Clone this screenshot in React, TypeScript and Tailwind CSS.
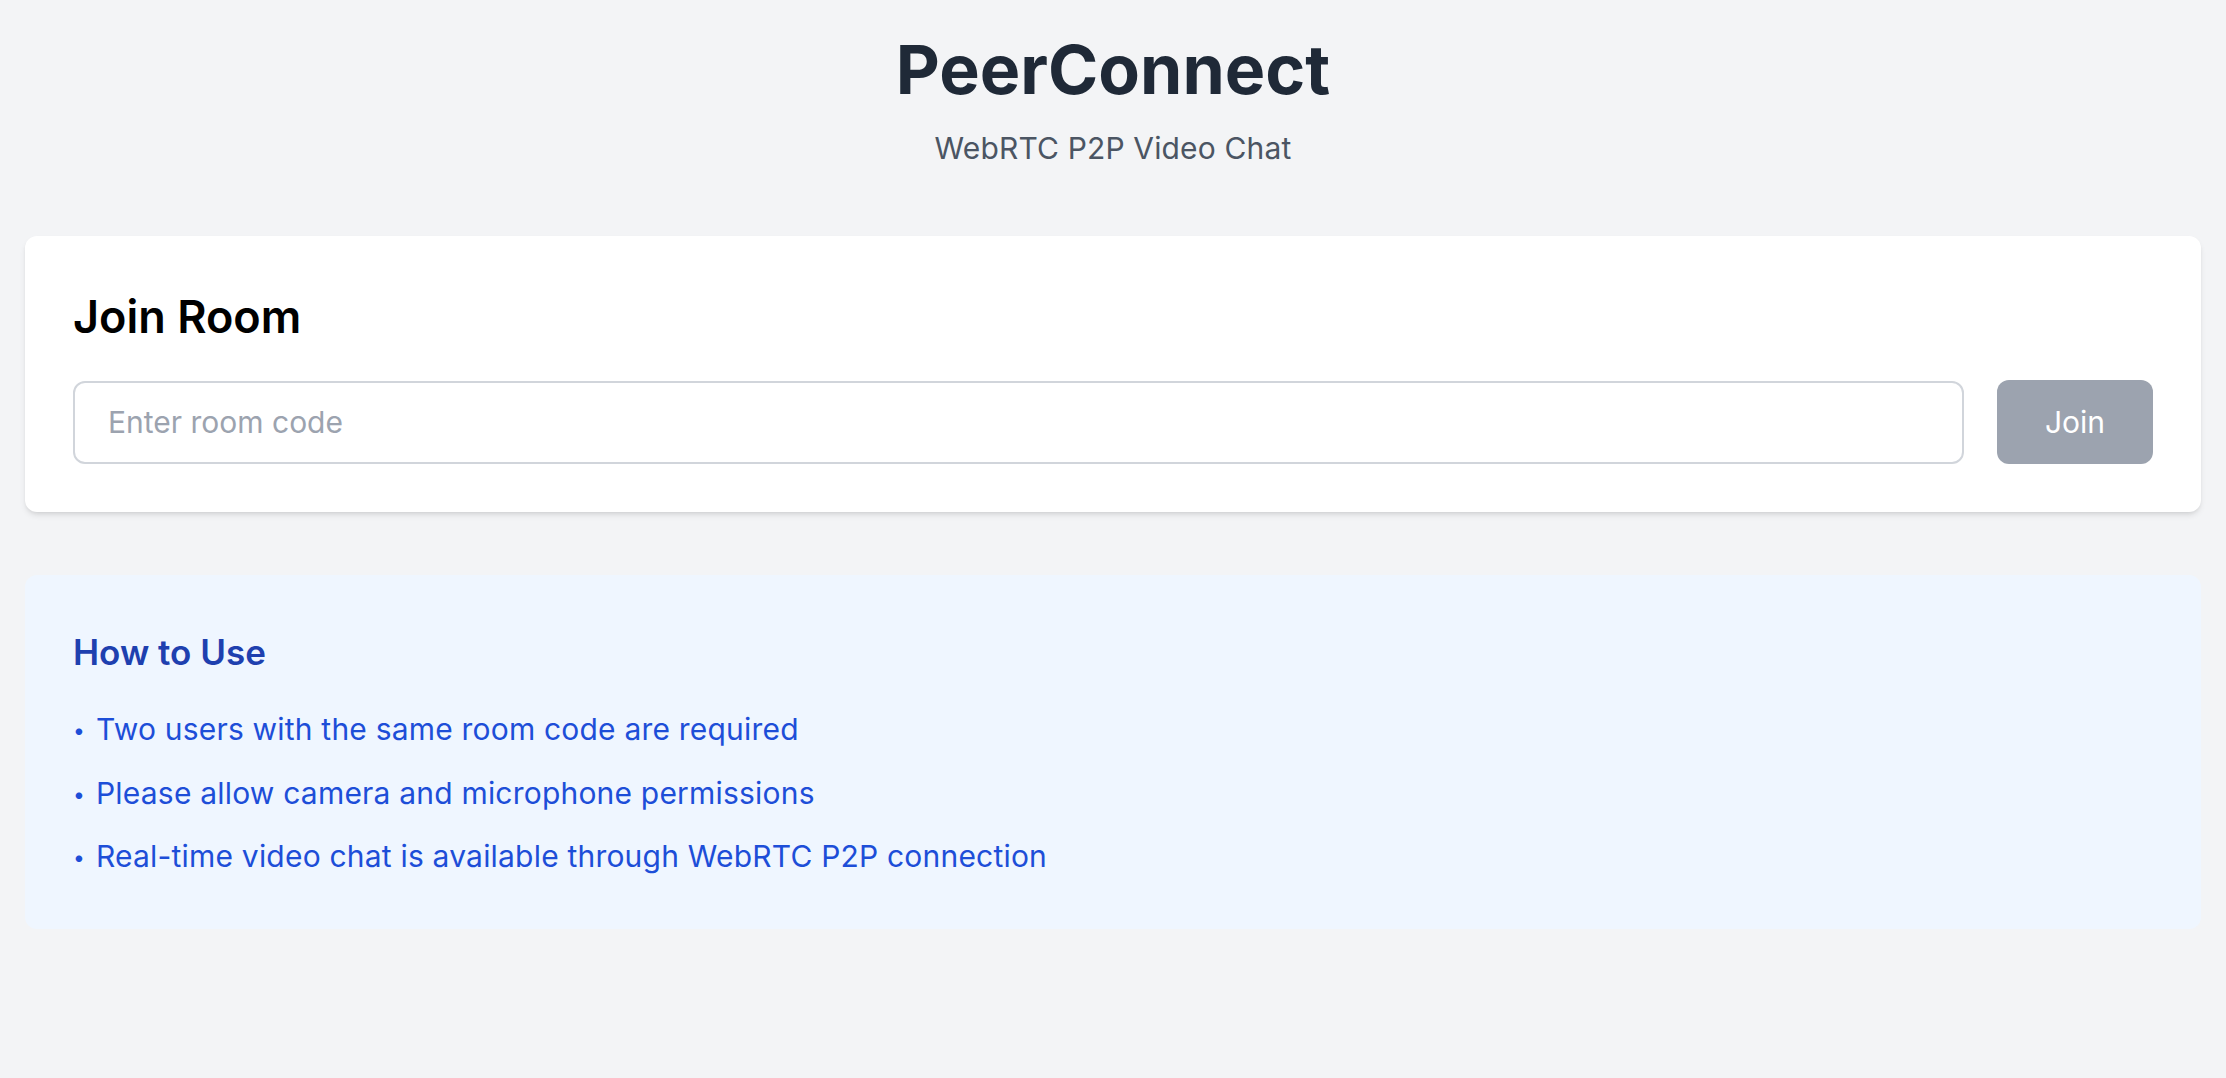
import { useState } from 'react'

const tips = [
  'Two users with the same room code are required',
  'Please allow camera and microphone permissions',
  'Real-time video chat is available through WebRTC P2P connection',
]

export default function App() {
  const [code, setCode] = useState('')

  return (
    <div className="min-h-screen bg-[#f3f4f6] font-['Inter',sans-serif]">
      <div className="mx-auto max-w-[2176px] pt-[35px] pb-12">
        <header className="text-center mb-[67px]">
          <h1 className="text-[68px] leading-[68px] font-bold text-[#1f2937]">PeerConnect</h1>
          <p className="mt-[24px] text-[30px] leading-[42px] tracking-[0.15px] text-[#4b5563]">WebRTC P2P Video Chat</p>
        </header>

        <section className="bg-white rounded-[12px] shadow-md px-12 pt-12 pb-[48px]">
          <h2 className="text-[45px] leading-[65px] font-semibold text-black mb-[31px]">Join Room</h2>
          <div className="flex items-center gap-[33px]">
            <input
              value={code}
              onChange={e => setCode(e.target.value)}
              placeholder="Enter room code"
              className="flex-1 h-[83px] rounded-[12px] border-2 border-[#d1d5db] bg-white pl-[33px] pr-6 text-[30px] text-[#1f2937] placeholder:text-[#9ca3af] outline-none"
            />
            <button
              disabled={!code.trim()}
              className="w-[156px] h-[84px] rounded-[12px] bg-[#9ca3af] text-white text-[30px] enabled:bg-[#3b82f6]"
            >
              Join
            </button>
          </div>
        </section>

        <section className="mt-[63px] bg-[#eff6ff] rounded-[12px] px-12 pt-[49px] pb-[50px]">
          <h3 className="text-[35px] leading-[56px] font-semibold text-[#1e40af] mb-[27px]">How to Use</h3>
          <ul className="space-y-[18.5px]">
            {tips.map(t => (
              <li key={t} className="text-[30px] leading-[45px] tracking-[0.2px] text-[#1d4ed8]">
                <span className="inline-block w-[23px] text-[21px] leading-none align-[2px]">•</span>
                {t}
              </li>
            ))}
          </ul>
        </section>
      </div>
    </div>
  )
}
